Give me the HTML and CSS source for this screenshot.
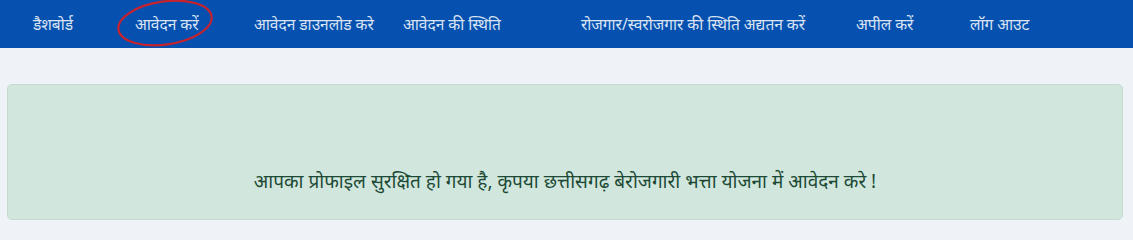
FILE: index.html
```html
<!DOCTYPE html>
<html lang="hi">
<head>
<meta charset="utf-8">
<title>आवेदन</title>
<link rel="stylesheet" href="styles.css">
</head>
<body>
<nav class="navbar">
  <a class="nav-link" href="#">डैशबोर्ड</a>
  <a class="nav-link circled" href="#">आवेदन करें
    <svg class="mark" width="104" height="54" viewBox="0 0 104 54" aria-hidden="true">
      <ellipse cx="52" cy="25" rx="47" ry="21.5" transform="rotate(-8 52 25)" fill="none" stroke="#c8232c" stroke-width="2.2"/>
    </svg>
  </a>
  <a class="nav-link" href="#">आवेदन डाउनलोड करे</a>
  <a class="nav-link" href="#">आवेदन की स्थिति</a>
  <a class="nav-link" href="#">रोजगार/स्वरोजगार की स्थिति अद्यतन करें</a>
  <a class="nav-link" href="#">अपील करें</a>
  <a class="nav-link" href="#">लॉग आउट</a>
</nav>
<main class="content">
  <div class="alert">आपका प्रोफाइल सुरक्षित हो गया है, कृपया छत्तीसगढ़ बेरोजगारी भत्ता योजना में आवेदन करे !</div>
</main>
</body>
</html>
```
FILE: styles.css
```css
body {
  margin: 0;
  background: #eff2f6;
  font-family: "Noto Sans", "Liberation Sans", sans-serif;
}
.navbar {
  height: 48px;
  background: #0650b0;
  display: grid;
  grid-template-columns: 102px 119px 149px 178px 275px 114px auto;
  align-items: center;
  padding-left: 33px;
}
.nav-link {
  display: block;
  justify-self: start;
  color: #d9e4f3;
  text-decoration: none;
  font-size: 15.5px;
  line-height: 20px;
  position: relative;
  white-space: nowrap;
}
.mark {
  position: absolute;
  left: -22px;
  top: -16px;
  pointer-events: none;
}
.content {
  padding: 36px 10px 0 7px;
}
.alert {
  height: 136px;
  box-sizing: border-box;
  background: #d1e7dd;
  border: 1px solid #c3dccf;
  border-radius: 5px;
  color: #1d4a36;
  font-size: 19px;
  text-align: center;
  padding-top: 83px;
}
```
